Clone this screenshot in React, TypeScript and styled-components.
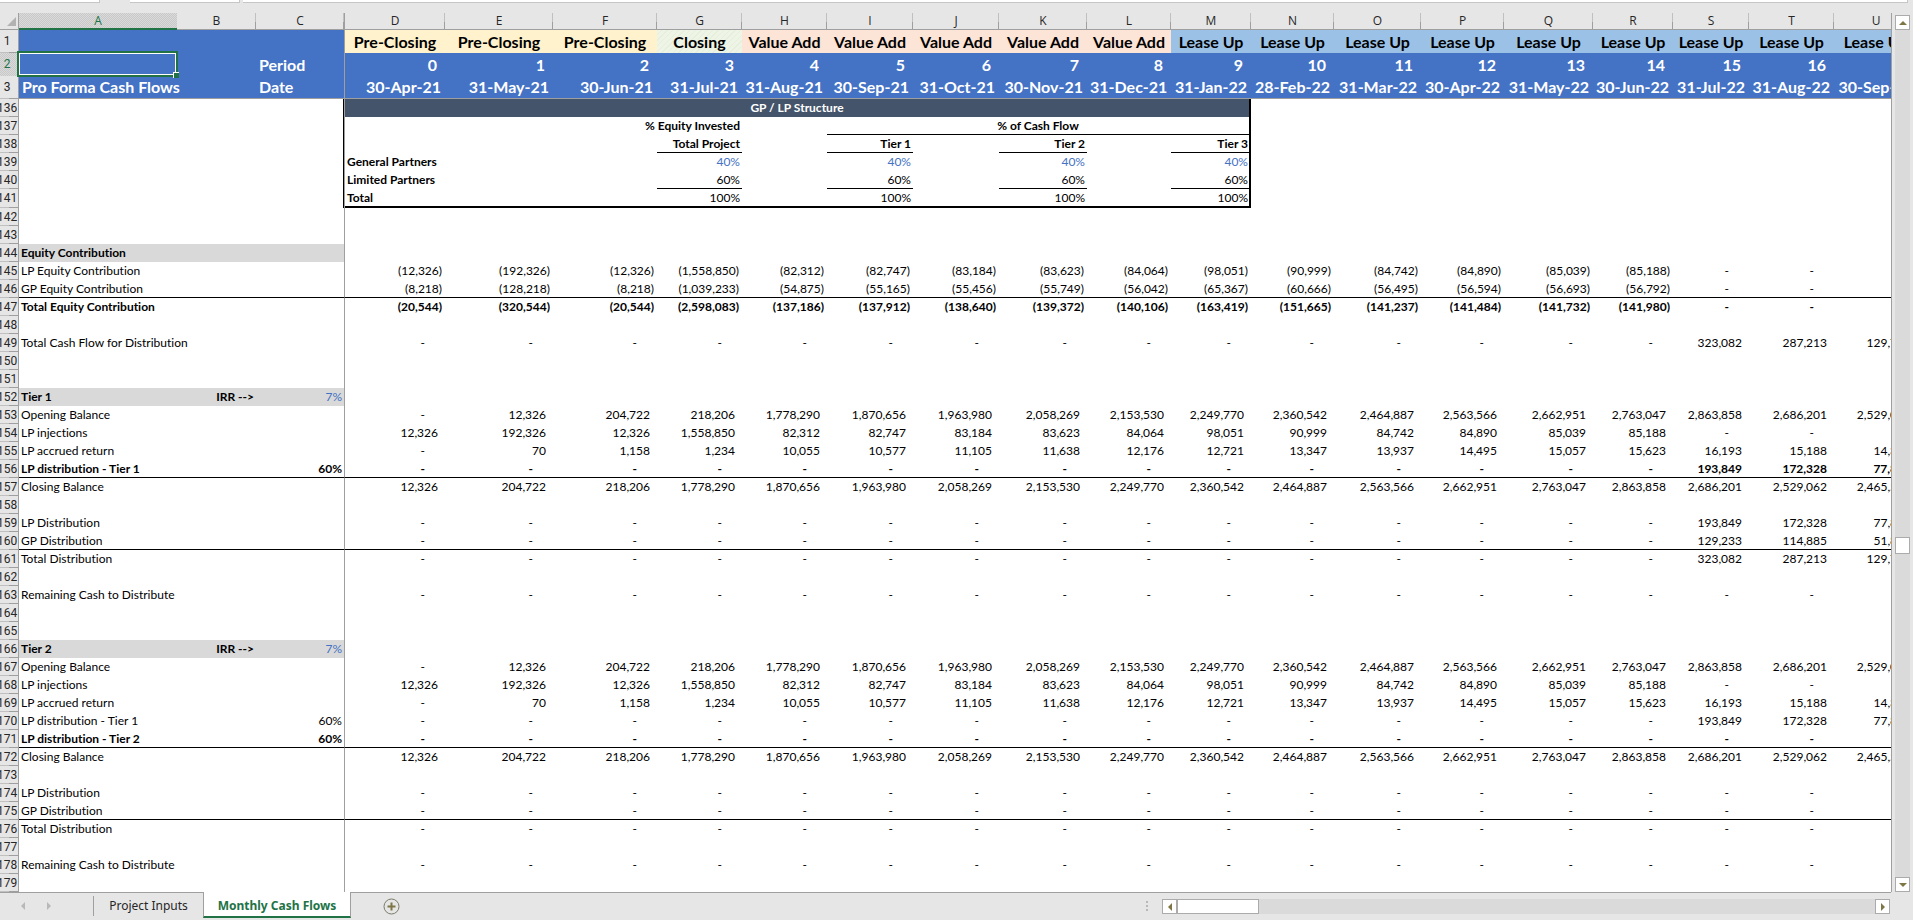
import React from "react";
import styled, { createGlobalStyle, css } from "styled-components";

const LINE = "#9f9f9f";
const CHROME = "#e6e6e6";
const GREEN = "#217346";
const BLUE = "#4472c4";

const GlobalStyle = createGlobalStyle`
  *, *::before, *::after { box-sizing: border-box; }
  body {
    margin: 0;
    background: ${CHROME};
    color: #000;
    font-family: Lato, "Liberation Sans", sans-serif;
    font-variant-ligatures: none;
  }
  button { font: inherit; padding: 0; border: 0; background: none; color: inherit; }
`;

const Page = styled.div`
  display: flex;
  flex-direction: column;
  min-height: 100vh;
  background: ${CHROME};
`;

const FormulaStrip = styled.div`
  display: flex;
  height: 13px;
  padding-right: 5px;
`;

const StripBox = styled.div<{ $width?: number; $gap?: number }>`
  height: 3px;
  flex: ${(p) => (p.$width ? `0 0 ${p.$width}px` : "1")};
  margin-left: ${(p) => p.$gap ?? 0}px;
  background: #fff;
  border-right: 1px solid #c6c6c6;
  border-bottom: 1px solid #c6c6c6;
`;

const Main = styled.main`
  display: flex;
  flex: 1;
`;

const Pane = styled.div`
  flex: 1;
  min-width: 0;
  overflow: hidden;
  background: #fff;
  border-right: 1px solid ${LINE};
`;

const Sheet = styled.table`
  table-layout: fixed;
  width: 100%;
  border-collapse: separate;
  border-spacing: 0;
  font-size: 12px;
  line-height: 17px;
`;

const ColumnHead = styled.th<{ $selected?: boolean; $frozen?: boolean }>`
  height: 17px;
  padding: 0;
  font-family: "Open Sans", sans-serif;
  font-size: 12px;
  font-weight: 400;
  line-height: 14px;
  text-align: center;
  color: #262626;
  border-bottom: 1px solid ${LINE};
  background: linear-gradient(#c0c0c0 0 9px, ${LINE} 9px) right / 1px 100% no-repeat ${CHROME};
  ${(p) => p.$frozen && css`border-right: 1px solid ${LINE};`}
  ${(p) =>
    p.$selected &&
    css`
      color: ${GREEN};
      background: repeating-conic-gradient(#c8c8c8 0 25%, #dadada 0 50%) 0 0 / 2px 2px;
      border-bottom: 2px solid ${GREEN};
    `}
`;

const Corner = styled.td`
  height: 17px;
  padding: 0;
  background: ${CHROME};
  border-right: 1px solid ${LINE};
  border-bottom: 1px solid ${LINE};
  svg { display: block; margin-left: 7px; }
`;

const RowHead = styled.th<{ $selected?: boolean }>`
  padding: 0;
  font-family: Roboto, sans-serif;
  font-size: 12px;
  font-weight: 400;
  line-height: 17px;
  color: ${(p) => (p.$selected ? GREEN : "#262626")};
  border-right: 1px solid ${LINE};
  background: ${(p) =>
    p.$selected
      ? "repeating-conic-gradient(#c8c8c8 0 25%, #dadada 0 50%) 0 0 / 2px 2px"
      : `linear-gradient(90deg, #c0c0c0 0 9px, ${LINE} 9px) bottom / 100% 1px no-repeat ${CHROME}`};
`;

const RowNumber = styled.div`
  display: flex;
  justify-content: center;
  padding-right: 4px;
  overflow: hidden;
`;

const TitleRow = styled.tr`
  height: 23px;
  font-size: 16px;
  line-height: 20px;
  font-weight: 700;
`;

const TitleCell = styled.td<{ $align?: string; $inset?: number; $frozen?: boolean; $last?: boolean }>`
  position: relative;
  padding: 0 ${(p) => p.$inset ?? 4}px 0 3px;
  background: ${BLUE};
  color: #fff;
  text-align: ${(p) => p.$align ?? "right"};
  white-space: nowrap;
  ${(p) => p.$frozen && css`border-right: 1px solid ${LINE};`}
  ${(p) => p.$last && css`border-bottom: 1px solid ${LINE};`}
`;

type Phase = "Pre-Closing" | "Closing" | "Value Add" | "Lease Up";

const phaseFill: Record<Phase, string> = {
  "Pre-Closing": "#fff2cc",
  Closing: "repeating-linear-gradient(135deg, #eef4e6 0 3px, #e6efdc 3px 4px)",
  "Value Add": "#fce4d6",
  "Lease Up": "#9bc2e6",
};

const PhaseCell = styled.td<{ $phase: Phase }>`
  padding: 0;
  text-align: center;
  white-space: nowrap;
  background: ${(p) => phaseFill[p.$phase]};
`;

const Selection = styled.div`
  position: absolute;
  inset: -2px -1px -1px -2px;
  border: 2px solid ${GREEN};
  box-shadow: inset 0 0 0 1px #fff;
  z-index: 1;
  &::after {
    content: "";
    position: absolute;
    right: -3px;
    bottom: -3px;
    width: 6px;
    height: 6px;
    background: ${GREEN};
    border-top: 1px solid #fff;
    border-left: 1px solid #fff;
  }
`;

const Row = styled.tr<{ $ruled?: boolean; $bold?: boolean; $tall?: boolean }>`
  height: ${(p) => (p.$tall ? 19 : 18)}px;
  font-weight: ${(p) => (p.$bold ? 700 : 400)};
  > td {
    vertical-align: top;
    ${(p) => p.$ruled && css`border-bottom: 1px solid #000;`}
  }
`;

const Cell = styled.td<{
  $align?: string;
  $pad?: number;
  $shade?: boolean;
  $frozen?: boolean;
  $boxed?: boolean;
  $input?: boolean;
  $bold?: boolean;
}>`
  padding: 0 ${(p) => p.$pad ?? 2}px;
  text-align: ${(p) => p.$align ?? "right"};
  white-space: nowrap;
  ${(p) => p.$shade && css`background: #d9d9d9;`}
  ${(p) => p.$input && css`color: ${BLUE};`}
  ${(p) => p.$bold && css`font-weight: 700;`}
  ${(p) => p.$frozen && css`border-right: 1px solid ${LINE};`}
  ${(p) => p.$boxed && css`box-shadow: inset -1px 0 #000;`}
`;

const BoxCell = styled(Cell)<{ $under?: boolean; $edge?: boolean; $bottom?: boolean; $title?: boolean }>`
  && {
    ${(p) => p.$under && css`border-bottom: 1px solid #000;`}
    ${(p) => p.$bottom && css`border-bottom: 2px solid #000;`}
    ${(p) => p.$edge && css`border-right: 2px solid #000;`}
    ${(p) => p.$title && css`background: #44546a; color: #fff;`}
  }
`;

const Plain = styled.span`
  font-weight: 400;
`;

const VerticalBar = styled.div`
  display: flex;
  flex-direction: column;
  width: 21px;
  padding: 2px 3px 0 3px;
`;

const Track = styled.div<{ $vertical?: boolean }>`
  display: flex;
  flex: 1;
  flex-direction: ${(p) => (p.$vertical ? "column" : "row")};
  background: #dadada;
`;

const Spacer = styled.div<{ $grow: number }>`
  flex: ${(p) => p.$grow};
`;

const Thumb = styled.div<{ $vertical?: boolean }>`
  flex: 0 0 ${(p) => (p.$vertical ? 17 : 82)}px;
  background: #fff;
  border: 1px solid #ababab;
`;

const ArrowButton = styled.button`
  display: flex;
  flex: 0 0 15px;
  align-items: center;
  justify-content: center;
  width: 15px;
  height: 15px;
  background: #fff;
  border: 1px solid #ababab;
`;

const Footer = styled.footer`
  display: flex;
  height: 28px;
`;

const SheetNav = styled.nav`
  display: flex;
  flex: 1;
  border-top: 1px solid ${LINE};
  font-family: "Noto Sans", sans-serif;
  font-size: 12px;
  line-height: 16px;
`;

const NavArrows = styled.div`
  display: flex;
  align-items: center;
  justify-content: space-between;
  width: 94px;
  height: 20px;
  margin-top: 3px;
  padding: 0 40px 0 19px;
  border-right: 1px solid ${LINE};
  button { display: flex; }
`;

const Tab = styled.button<{ $active?: boolean }>`
  height: ${(p) => (p.$active ? 26 : 25)}px;
  width: ${(p) => (p.$active ? 148 : 109)}px;
  color: #262626;
  ${(p) =>
    p.$active &&
    css`
      margin-top: -1px;
      padding-top: 3px;
      color: ${GREEN};
      font-weight: 700;
      background: #fff;
      border: 1px solid ${LINE};
      border-top: 0;
      border-bottom: 2px solid ${GREEN};
    `}
`;

const AddSheet = styled.button`
  display: flex;
  align-items: center;
  height: 26px;
  margin-left: 32px;
`;

const HorizontalBar = styled.div`
  display: flex;
  align-items: flex-start;
  flex: 0 0 767px;
  padding: 6px 23px 0 0;
  border-top: 1px solid ${LINE};
  ${Track} { height: 15px; }
`;

const Grip = styled.svg`
  margin-right: 14px;
`;

const BottomCorner = styled.div`
  width: 22px;
  margin-left: -22px;
  background: ${CHROME};
`;

const widths = [19, 158, 79, 89, 100, 108, 104, 85, 85, 86, 86, 88, 84, 80, 83, 87, 83, 89, 80, 76, 85, 84];
const letters = "ABCDEFGHIJKLMNOPQRSTU".split("");

const dates = [
  "30-Apr-21", "31-May-21", "30-Jun-21", "31-Jul-21", "31-Aug-21", "30-Sep-21", "31-Oct-21", "30-Nov-21", "31-Dec-21",
  "31-Jan-22", "28-Feb-22", "31-Mar-22", "30-Apr-22", "31-May-22", "30-Jun-22", "31-Jul-22", "31-Aug-22", "30-Sep-22",
];

const phaseAt = (i: number): Phase =>
  i < 3 ? "Pre-Closing" : i === 3 ? "Closing" : i < 9 ? "Value Add" : "Lease Up";

const lpIn = "12,326 192,326 12,326 1,558,850 82,312 82,747 83,184 83,623 84,064 98,051 90,999 84,742 84,890 85,039 85,188 - - -";
const gpIn = "8,218 128,218 8,218 1,039,233 54,875 55,165 55,456 55,749 56,042 65,367 60,666 56,495 56,594 56,693 56,792 - - -";
const totalIn =
  "20,544 320,544 20,544 2,598,083 137,186 137,912 138,640 139,372 140,106 163,419 151,665 141,237 141,484 141,732 141,980 - - -";
const balances =
  "- 12,326 204,722 218,206 1,778,290 1,870,656 1,963,980 2,058,269 2,153,530 2,249,770 2,360,542 2,464,887 2,563,566 2,662,951 2,763,047 2,863,858 2,686,201 2,529,062 2,465,524";
const accrued = "- 70 1,158 1,234 10,055 10,577 11,105 11,638 12,176 12,721 13,347 13,937 14,495 15,057 15,623 16,193 15,188 14,300";

const split = (s: string) => s.split(" ");
const negative = (s: string) => split(s).map((v) => (v === "-" ? v : `(${v})`));
const dashes = Array<string>(18).fill("-");
const tail = (...values: string[]) => [...dashes.slice(0, 15), ...values];

const opening = split(balances).slice(0, 18);
const closing = split(balances).slice(1);
const cash = tail("323,082", "287,213", "129,730");
const lpShare = tail("193,849", "172,328", "77,838");
const gpShare = tail("129,233", "114,885", "51,892");

interface Line {
  label?: string;
  note?: string;
  pct?: string;
  values?: string[];
  bold?: boolean;
  heading?: boolean;
  ruled?: boolean;
}

const lines: Line[] = [
  {},
  {},
  { label: "Equity Contribution", heading: true },
  { label: "LP Equity Contribution", values: negative(lpIn) },
  { label: "GP Equity Contribution", values: negative(gpIn), ruled: true },
  { label: "Total Equity Contribution", values: negative(totalIn), bold: true },
  {},
  { label: "Total Cash Flow for Distribution", values: cash },
  {},
  {},
  { label: "Tier 1", note: "IRR -->", pct: "7%", heading: true },
  { label: "Opening Balance", values: opening },
  { label: "LP injections", values: split(lpIn) },
  { label: "LP accrued return", values: split(accrued) },
  { label: "LP distribution - Tier 1", pct: "60%", values: lpShare, bold: true, ruled: true },
  { label: "Closing Balance", values: closing },
  {},
  { label: "LP Distribution", values: lpShare },
  { label: "GP Distribution", values: gpShare, ruled: true },
  { label: "Total Distribution", values: cash },
  {},
  { label: "Remaining Cash to Distribute", values: dashes },
  {},
  {},
  { label: "Tier 2", note: "IRR -->", pct: "7%", heading: true },
  { label: "Opening Balance", values: opening },
  { label: "LP injections", values: split(lpIn) },
  { label: "LP accrued return", values: split(accrued) },
  { label: "LP distribution - Tier 1", pct: "60%", values: lpShare },
  { label: "LP distribution - Tier 2", pct: "60%", values: dashes, bold: true, ruled: true },
  { label: "Closing Balance", values: closing },
  {},
  { label: "LP Distribution", values: dashes },
  { label: "GP Distribution", values: dashes, ruled: true },
  { label: "Total Distribution", values: dashes },
  {},
  { label: "Remaining Cash to Distribute", values: dashes },
  {},
];

const valuePad = (v: string) => (v === "-" ? 20 : v.startsWith("(") ? 3 : 7);

function Num({ n, selected }: { n: number; selected?: boolean }) {
  return (
    <RowHead scope="row" $selected={selected}>
      <RowNumber>{n}</RowNumber>
    </RowHead>
  );
}

function Arrow({ dir, color = "#7f7646" }: { dir: "up" | "down" | "left" | "right"; color?: string }) {
  const d = {
    up: "M0 6L4 2L8 6Z",
    down: "M0 2L4 6L8 2Z",
    left: "M6 0L2 4L6 8Z",
    right: "M2 0L6 4L2 8Z",
  }[dir];
  return (
    <svg width="8" height="8" aria-hidden="true">
      <path d={d} fill={color} />
    </svg>
  );
}

function LedgerRow({ line, n }: { line: Line; n: number }) {
  const { label, note, pct, values, bold, heading, ruled } = line;
  return (
    <Row $ruled={ruled} $bold={bold || heading}>
      <Num n={n} />
      <Cell $align="left" $shade={heading} colSpan={note ? 1 : 2}>{label}</Cell>
      {note && <Cell $shade={heading}>{note}</Cell>}
      <Cell $shade={heading} $frozen $input={heading}>
        {heading && pct ? <Plain>{pct}</Plain> : pct}
      </Cell>
      {values ? values.map((v, i) => <Cell key={i} $pad={valuePad(v)}>{v}</Cell>) : <Cell colSpan={18} />}
    </Row>
  );
}

type SplitKind = "head" | "input" | "sum" | "total";

function SplitRow({ n, label, values, kind }: { n: number; label: string; values: string[]; kind: SplitKind }) {
  const cell = (v: string, edge = false) => (
    <BoxCell
      $bold={kind === "head"}
      $input={kind === "input"}
      $under={kind === "head" || kind === "sum"}
      $bottom={kind === "total"}
      $edge={edge}
      $pad={edge ? 1 : 2}
    >
      {v}
    </BoxCell>
  );
  const gap = <BoxCell $bottom={kind === "total"} />;
  return (
    <Row $tall={kind === "total"}>
      <Num n={n} />
      <Cell colSpan={3} $frozen $boxed />
      <BoxCell $align="left" $bold colSpan={3} $bottom={kind === "total"}>{label}</BoxCell>
      {cell(values[0])}
      {gap}
      {cell(values[1])}
      {gap}
      {cell(values[2])}
      {gap}
      {cell(values[3], true)}
      <Cell colSpan={8} />
    </Row>
  );
}

export default function App() {
  return (
    <Page>
      <GlobalStyle />
      <FormulaStrip>
        <StripBox $width={100} />
        <StripBox $width={110} $gap={30} />
        <StripBox $gap={3} />
      </FormulaStrip>
      <Main>
        <Pane>
          <Sheet>
            <colgroup>
              {widths.map((w, i) => <col key={i} width={w} />)}
            </colgroup>
            <thead>
              <tr>
                <Corner>
                  <svg width="9" height="9" aria-hidden="true"><path d="M9 0V9H0Z" fill="#b2b2b2" /></svg>
                </Corner>
                {letters.map((l) => (
                  <ColumnHead key={l} scope="col" $selected={l === "A"} $frozen={l === "C"}>{l}</ColumnHead>
                ))}
              </tr>
            </thead>
            <tbody>
              <TitleRow>
                <Num n={1} />
                <TitleCell colSpan={3} $frozen />
                {dates.map((_, i) => <PhaseCell key={i} $phase={phaseAt(i)}>{phaseAt(i)}</PhaseCell>)}
              </TitleRow>
              <TitleRow>
                <Num n={2} selected />
                <TitleCell><Selection /></TitleCell>
                <TitleCell />
                <TitleCell $align="left" $frozen>Period</TitleCell>
                {dates.map((_, i) => <TitleCell key={i} $inset={8}>{i}</TitleCell>)}
              </TitleRow>
              <TitleRow>
                <Num n={3} />
                <TitleCell colSpan={2} $align="left" $last>Pro Forma Cash Flows</TitleCell>
                <TitleCell $align="left" $frozen $last>Date</TitleCell>
                {dates.map((d) => <TitleCell key={d} $last>{d}</TitleCell>)}
              </TitleRow>
              <Row $bold>
                <Num n={136} />
                <Cell colSpan={3} $frozen $boxed />
                <BoxCell colSpan={10} $align="center" $edge $title>GP / LP Structure</BoxCell>
                <Cell colSpan={8} />
              </Row>
              <Row $bold>
                <Num n={137} />
                <Cell colSpan={3} $frozen $boxed />
                <Cell colSpan={2} />
                <Cell colSpan={2}>% Equity Invested</Cell>
                <Cell />
                <BoxCell colSpan={5} $align="center" $edge $under>% of Cash Flow</BoxCell>
                <Cell colSpan={8} />
              </Row>
              <SplitRow n={138} label="" kind="head" values={["Total Project", "Tier 1", "Tier 2", "Tier 3"]} />
              <SplitRow n={139} label="General Partners" kind="input" values={["40%", "40%", "40%", "40%"]} />
              <SplitRow n={140} label="Limited Partners" kind="sum" values={["60%", "60%", "60%", "60%"]} />
              <SplitRow n={141} label="Total" kind="total" values={["100%", "100%", "100%", "100%"]} />
              {lines.map((line, i) => <LedgerRow key={i} line={line} n={142 + i} />)}
            </tbody>
          </Sheet>
        </Pane>
        <VerticalBar>
          <ArrowButton type="button" aria-label="Scroll up"><Arrow dir="up" /></ArrowButton>
          <Track $vertical>
            <Spacer $grow={507} />
            <Thumb $vertical />
            <Spacer $grow={323} />
          </Track>
          <ArrowButton type="button" aria-label="Scroll down"><Arrow dir="down" /></ArrowButton>
        </VerticalBar>
      </Main>
      <Footer>
        <SheetNav>
          <NavArrows>
            <button type="button" aria-label="Previous sheet"><Arrow dir="left" color="#b8b8b8" /></button>
            <button type="button" aria-label="Next sheet"><Arrow dir="right" color="#b8b8b8" /></button>
          </NavArrows>
          <Tab type="button">Project Inputs</Tab>
          <Tab type="button" $active>Monthly Cash Flows</Tab>
          <AddSheet type="button" aria-label="New sheet">
            <svg width="17" height="17" fill="none" aria-hidden="true">
              <circle cx="8.5" cy="8.5" r="7.5" stroke="#7a7a6a" />
              <path d="M4.500 8.500H12.500M8.500 4.500V12.500" stroke="#7f7646" strokeWidth="2" />
            </svg>
          </AddSheet>
        </SheetNav>
        <HorizontalBar>
          <Grip width="2" height="15" aria-hidden="true">
            <path d="M0 2h2v2H0zM0 6h2v2H0zM0 10h2v2H0z" fill="#b8b8b8" />
          </Grip>
          <ArrowButton type="button" aria-label="Scroll left"><Arrow dir="left" /></ArrowButton>
          <Track>
            <Thumb />
            <Spacer $grow={1} />
          </Track>
          <ArrowButton type="button" aria-label="Scroll right"><Arrow dir="right" /></ArrowButton>
        </HorizontalBar>
        <BottomCorner />
      </Footer>
    </Page>
  );
}
